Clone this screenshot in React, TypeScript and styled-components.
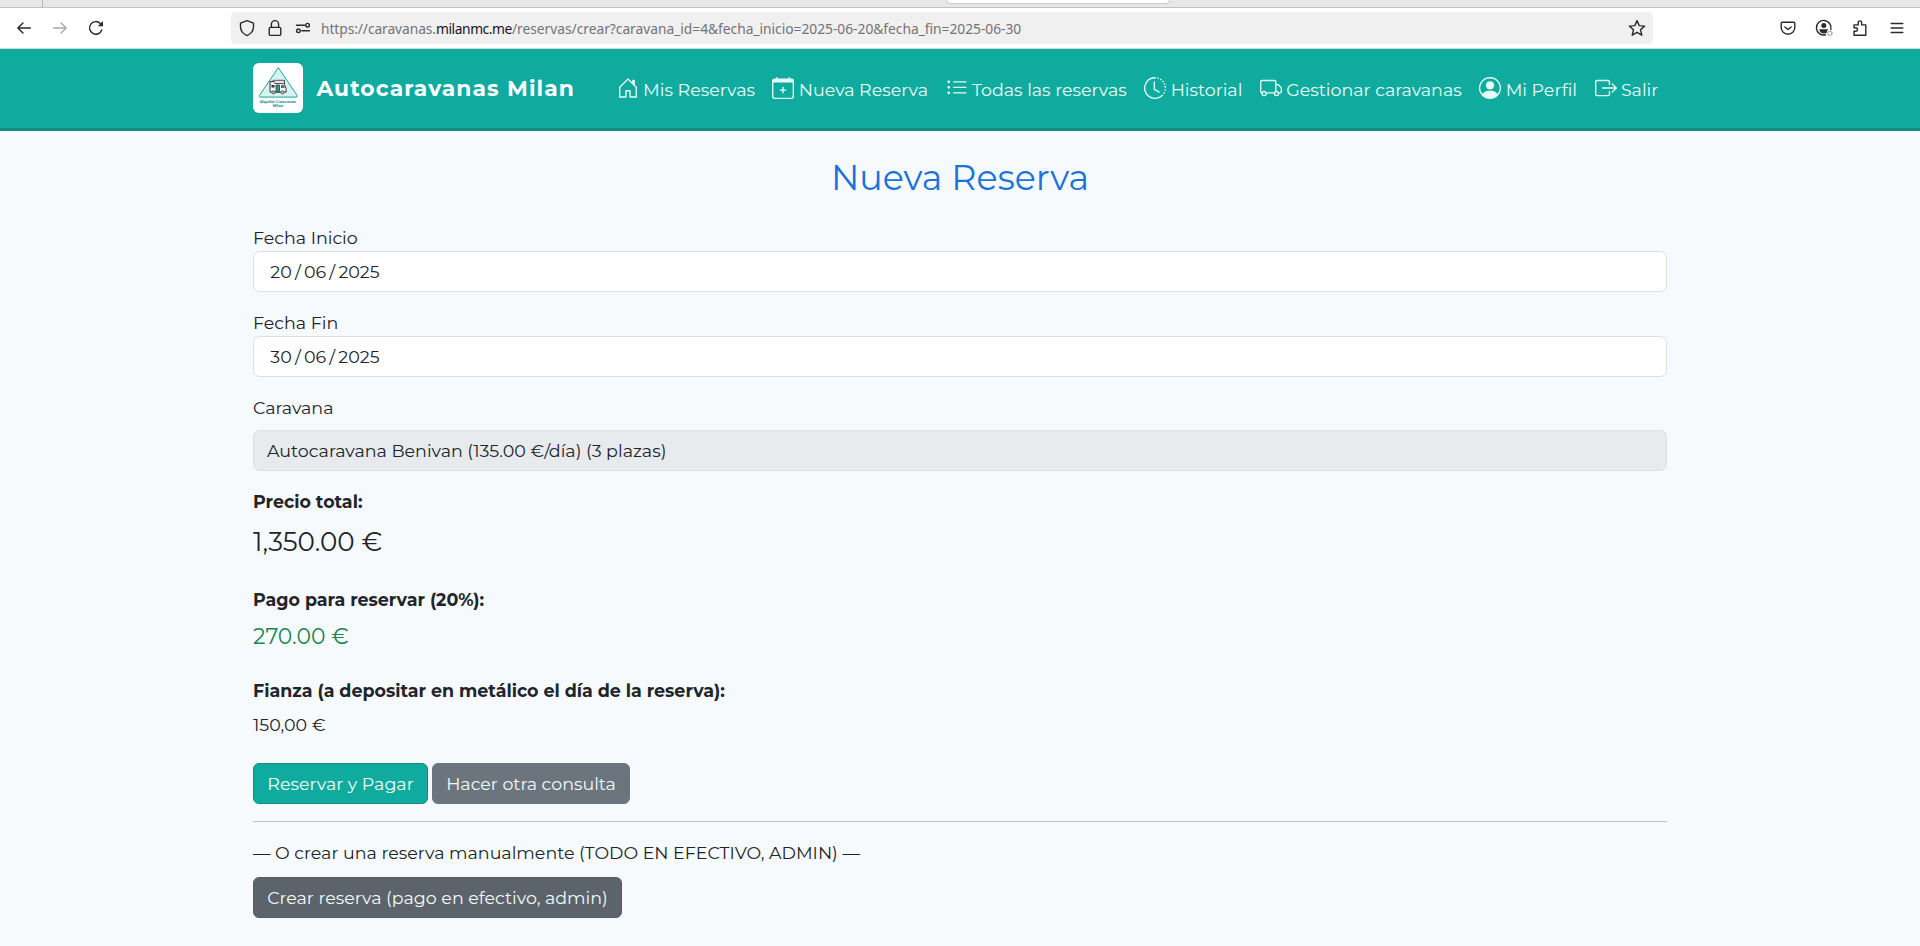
import React from "react";
import styled, { createGlobalStyle } from "styled-components";
import {
  BsHouseDoor,
  BsCalendarPlus,
  BsListUl,
  BsClockHistory,
  BsTruck,
  BsPersonCircle,
  BsBoxArrowRight,
} from "react-icons/bs";

const GlobalStyle = createGlobalStyle`
  *, *::before, *::after { box-sizing: border-box; }
  body {
    margin: 0;
    background: #f7fafd;
    color: #212529;
    font-family: Montserrat, Inter, "Liberation Sans", sans-serif;
    font-size: 17.47px;
    line-height: 27px;
    overflow: hidden;
  }
`;

/* Browser chrome */

const TabStrip = styled.div`
  display: flex;
  height: 8px;
  background: #e8e8e8;
  border-bottom: 1px solid #c2c2c2;
`;

const PinnedTab = styled.div`
  width: 43px;
  border-right: 1px solid #b5b5b5;
`;

const ActiveTab = styled.div`
  width: 222px;
  height: 3px;
  margin-left: 904px;
  background: #fff;
  border-radius: 0 0 4px 4px;
  box-shadow: 0 0 2px rgba(0, 0, 0, 0.45);
`;

const Toolbar = styled.div`
  display: flex;
  align-items: center;
  height: 41px;
  padding: 0 0 0 15px;
  background: #fff;
  border-bottom: 1px solid #c9dedb;
`;

const ToolGroup = styled.div<{ $gap: number }>`
  display: flex;
  align-items: center;
  gap: ${(p) => p.$gap}px;
`;

const ChromeIcon = styled.svg<{ $muted?: boolean }>`
  display: block;
  flex: none;
  width: 18px;
  height: 18px;
  fill: none;
  stroke: ${(p) => (p.$muted ? "#a8a8a8" : "#2a2a2e")};
  stroke-width: 1.4;
  stroke-linecap: round;
  stroke-linejoin: round;
`;

const AddressBar = styled.div`
  display: flex;
  flex: none;
  align-items: center;
  width: 1422px;
  height: 32px;
  margin: 0 126px;
  padding: 0 7px;
  background: #f0f0f1;
  border-radius: 4px;
`;

const Url = styled.div`
  display: flex;
  flex: 1;
  margin-left: 9px;
  padding-top: 1px;
  color: #737376;
  font-family: "Noto Sans", sans-serif;
  font-size: 13.8px;
  line-height: 20px;
  white-space: nowrap;
`;

const UrlPart = styled.span<{ $track: number; $strong?: boolean }>`
  letter-spacing: ${(p) => p.$track}px;
  color: ${(p) => (p.$strong ? "#15141a" : "inherit")};
`;

/* Site header */

const Header = styled.header`
  height: 82px;
  background: #10ab9f;
  border-bottom: 3px solid #148c82;
`;

const Container = styled.div`
  width: 1414px;
  margin: 0 auto;
`;

const HeaderRow = styled(Container)`
  display: flex;
  align-items: center;
  height: 78px;
`;

const Logo = styled.svg`
  display: block;
  width: 50px;
  height: 50px;
  background: #fff;
  border-radius: 6px;
`;

const Brand = styled.span`
  margin-left: 13.5px;
  color: #fff;
  font-size: 21.8px;
  font-weight: 700;
  letter-spacing: 1.09px;
`;

const Nav = styled.nav`
  display: flex;
  gap: 17.5px;
  margin-left: auto;
  padding: 3px 8.7px 0 0;
`;

const NavLink = styled.a`
  display: flex;
  align-items: center;
  gap: 4.4px;
  color: #e8fbf8;
  white-space: nowrap;

  svg {
    width: 22px;
    height: 22px;
    margin-bottom: 4px;
  }
`;

/* Booking form */

const Title = styled.h2`
  margin: 0;
  padding-top: 26px;
  color: #1a73d9;
  font-size: 34.9px;
  font-weight: 400;
  line-height: 42px;
  text-align: center;
`;

const Field = styled.div<{ $top: number; $gap?: number }>`
  display: flex;
  flex-direction: column;
  gap: ${(p) => p.$gap ?? 0}px;
  padding-top: ${(p) => p.$top}px;
`;

const Control = styled.div<{ $disabled?: boolean }>`
  display: flex;
  align-items: center;
  height: 41px;
  padding: 0 ${(p) => (p.$disabled ? 13 : 16.3)}px;
  background: ${(p) => (p.$disabled ? "#e8ebee" : "#fff")};
  border: 1px solid #dbe0e4;
  border-radius: 6.5px;
`;

const DateParts = styled.div`
  display: flex;
  gap: 3.2px;
`;

const Amount = styled.div<{ $size?: number; $line?: number; $color?: string }>`
  font-size: ${(p) => p.$size ?? 17.47}px;
  line-height: ${(p) => p.$line ?? 27}px;
  color: ${(p) => p.$color ?? "inherit"};
`;

const Strong = styled.div`
  font-weight: 700;
`;

const Actions = styled.div<{ $top: number }>`
  display: flex;
  gap: 4px;
  padding-top: ${(p) => p.$top}px;
`;

const Button = styled.button<{ $bg: string; $border: string; $width: number }>`
  width: ${(p) => p.$width}px;
  height: 41px;
  padding: 0;
  border: 1px solid ${(p) => p.$border};
  border-radius: 6px;
  background: ${(p) => p.$bg};
  color: #f1fafa;
  font: inherit;
  white-space: nowrap;
`;

const Divider = styled.hr`
  height: 1px;
  margin: 17px 0 0;
  border: 0;
  background: #bdc1c5;
`;

const Note = styled.p`
  margin: 0;
  padding-top: 17px;
`;

const navItems = [
  { icon: BsHouseDoor, label: "Mis Reservas" },
  { icon: BsCalendarPlus, label: "Nueva Reserva" },
  { icon: BsListUl, label: "Todas las reservas" },
  { icon: BsClockHistory, label: "Historial" },
  { icon: BsTruck, label: "Gestionar caravanas" },
  { icon: BsPersonCircle, label: "Mi Perfil" },
  { icon: BsBoxArrowRight, label: "Salir" },
];

function BrowserChrome() {
  return (
    <>
      <TabStrip>
        <PinnedTab />
        <ActiveTab />
      </TabStrip>
      <Toolbar>
        <ToolGroup $gap={18}>
          <ChromeIcon viewBox="0 0 18 18"><path d="M15.4 9H2.8M8 3.9 2.8 9 8 14.100" /></ChromeIcon>
          <ChromeIcon viewBox="0 0 18 18" $muted><path d="M2.600 9h12.600M10 3.900 15.200 9 10 14.100" /></ChromeIcon>
          <ChromeIcon viewBox="0 0 18 18">
            <path d="M14.8 11A6.300 6.300 0 1 1 13.300 4.400L15 6.200" />
            <path d="M16 2v5.200h-5.200z" fill="#2a2a2e" stroke="none" />
          </ChromeIcon>
        </ToolGroup>
        <AddressBar>
          <ToolGroup $gap={10}>
            <ChromeIcon viewBox="0 0 18 18"><path d="M9 1.600 15.500 4.200v3.400c0 4.400-2.600 7.400-6.500 9-3.900-1.600-6.500-4.600-6.500-9V4.200z" /></ChromeIcon>
            <ChromeIcon viewBox="0 0 18 18"><rect x="3.200" y="8.400" width="11.600" height="8" rx="1.500" /><path d="M5.400 8.400V5.200a3.600 3.600 0 0 1 7.200 0v3.200" /></ChromeIcon>
            <ChromeIcon viewBox="0 0 18 18"><path d="M2.400 6.200h8.200M7.800 11.800h7.600" /><circle cx="13.600" cy="6.200" r="1.800" /><circle cx="4.400" cy="11.800" r="1.800" /></ChromeIcon>
          </ToolGroup>
          <Url>
            <UrlPart $track={-0.08}>https://caravanas.</UrlPart>
            <UrlPart $track={-0.42} $strong>milanmc.me</UrlPart>
            <UrlPart $track={-0.02}>/reservas/crear?caravana_id=4&amp;fecha_inicio=2025-06-20&amp;fecha_fin=2025-06-30</UrlPart>
          </Url>
          <ChromeIcon viewBox="0 0 18 18"><path d="m9 1.600 2.200 5 5.400.5-4.100 3.600 1.300 5.500L9 13.300l-4.800 2.900 1.300-5.500L1.400 7.100l5.400-.5z" /></ChromeIcon>
        </AddressBar>
        <ToolGroup $gap={18.2}>
          <ChromeIcon viewBox="0 0 18 18"><path d="M3.500 3.300h11c.8 0 1.300.5 1.300 1.300v3.900c0 4-3 6.700-6.800 6.700s-6.800-2.700-6.800-6.700V4.600c0-.8.5-1.300 1.300-1.300zM5.800 8l3.200 2.500L12.200 8" /></ChromeIcon>
          <ChromeIcon viewBox="0 0 18 18">
            <path d="M15.800 10.500A7.300 7.300 0 1 0 10.500 15.800" />
            <circle cx="8.800" cy="6.400" r="2.500" fill="#2a2a2e" stroke="none" />
            <path d="M4.300 10.200h9c-1 1-1.600 2.300-1.500 3.600-3 1.600-7.500.4-7.500-3.600z" fill="#2a2a2e" stroke="none" />
            <circle cx="14.900" cy="14.300" r="2.200" stroke="#9a9a9a" strokeWidth="1" />
          </ChromeIcon>
          <ChromeIcon viewBox="0 0 18 18"><path d="M3 16.300v-4h1.700a1.800 1.800 0 0 0 0-3.600H3V5.900h4.200V3.600a1.700 1.700 0 0 1 3.400 0v2.300h4.200v10.400z" /></ChromeIcon>
          <ChromeIcon viewBox="0 0 18 18"><path d="M3.200 4.500h11.600M3.200 9h11.600M3.200 13.500h11.600" /></ChromeIcon>
        </ToolGroup>
      </Toolbar>
    </>
  );
}

function SiteLogo() {
  return (
    <Logo viewBox="0 0 50 50">
      <path d="M25.300 4.600 44.200 32.600q.6 1.500-1.100 1.500H7.500q-1.700 0-1.100-1.500z" fill="#d3f5f2" stroke="#239f96" strokeWidth="1" strokeLinejoin="round" />
      <path d="M17 18.500h14.500v3l1.600 4v3.600H17z" fill="#f7f3f4" stroke="#35303a" strokeWidth="1" />
      <path d="M20 17.300h11.500v3.200H22z" fill="#ebdfe2" stroke="#35303a" strokeWidth=".8" />
      <rect x="18.500" y="22" width="3" height="2.500" fill="#35303a" />
      <rect x="23" y="22" width="3.500" height="7" fill="#18a08f" stroke="#35303a" strokeWidth=".7" />
      <path d="M28 22h2.800l1 3H28z" fill="#5b6a72" />
      <circle cx="20.500" cy="29.400" r="1.500" fill="#ddd" stroke="#35303a" strokeWidth=".9" />
      <circle cx="29.500" cy="29.400" r="1.500" fill="#ddd" stroke="#35303a" strokeWidth=".9" />
      <text x="24.800" y="40.300" textAnchor="middle" fontSize="3.700" fontWeight="700" fill="#168a82" textLength="36" lengthAdjust="spacingAndGlyphs">Alquiler Caravanas</text>
      <text x="25" y="44.300" textAnchor="middle" fontSize="3.700" fontWeight="700" fill="#168a82">Milan</text>
    </Logo>
  );
}

function DateField({ label, value, top }: { label: string; value: [string, string, string]; top: number }) {
  return (
    <Field $top={top}>
      <label>{label}</label>
      <Control>
        <DateParts>
          <span>{value[0]}</span>
          <span>/</span>
          <span>{value[1]}</span>
          <span>/</span>
          <span>{value[2]}</span>
        </DateParts>
      </Control>
    </Field>
  );
}

export default function App() {
  return (
    <>
      <GlobalStyle />
      <BrowserChrome />
      <Header>
        <HeaderRow>
          <SiteLogo />
          <Brand>Autocaravanas Milan</Brand>
          <Nav>
            {navItems.map(({ icon: Icon, label }) => (
              <NavLink key={label}>
                <Icon />
                <span>{label}</span>
              </NavLink>
            ))}
          </Nav>
        </HeaderRow>
      </Header>
      <Container as="main">
        <Title>Nueva Reserva</Title>
        <DateField label="Fecha Inicio" value={["20", "06", "2025"]} top={25} />
        <DateField label="Fecha Fin" value={["30", "06", "2025"]} top={17} />
        <Field $top={17} $gap={9}>
          <label>Caravana</label>
          <Control $disabled>Autocaravana Benivan (135.00 €/día) (3 plazas)</Control>
        </Field>
        <Field $top={17} $gap={7}>
          <Strong>Precio total:</Strong>
          <Amount $size={26.2} $line={41}>1,350.00 €</Amount>
        </Field>
        <Field $top={23} $gap={7}>
          <Strong>Pago para reservar (20%):</Strong>
          <Amount $size={21.9} $line={33} $color="#198754">270.00 €</Amount>
        </Field>
        <Field $top={24} $gap={7}>
          <Strong>Fianza (a depositar en metálico el día de la reserva):</Strong>
          <Amount>150,00 €</Amount>
        </Field>
        <Actions $top={25}>
          <Button $bg="#10ab9f" $border="#148c82" $width={175}>Reservar y Pagar</Button>
          <Button $bg="#6c757d" $border="#6c757d" $width={198}>Hacer otra consulta</Button>
        </Actions>
        <Divider />
        <Note>— O crear una reserva manualmente (TODO EN EFECTIVO, ADMIN) —</Note>
        <Actions $top={11}>
          <Button $bg="#5c636a" $border="#565e64" $width={369}>Crear reserva (pago en efectivo, admin)</Button>
        </Actions>
      </Container>
    </>
  );
}
